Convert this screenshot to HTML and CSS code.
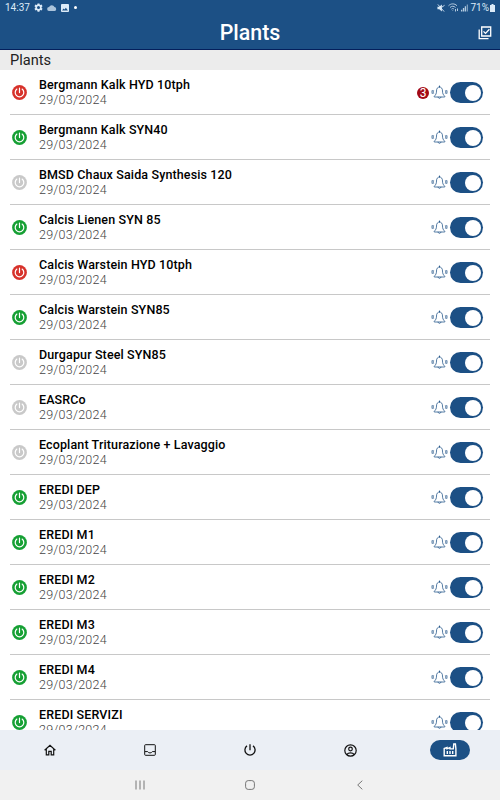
FILE: index.html
```html
<!DOCTYPE html>
<html lang="en">
<head>
  <meta charset="UTF-8" />
  <meta name="viewport" content="width=device-width, initial-scale=1" />
  <title>Plants</title>
  <link rel="stylesheet" href="styles.css">
</head>
<body>

  <!-- shared icons -->
  <svg class="sprite" aria-hidden="true">
    <symbol id="power" viewBox="0 0 15 15">
      <circle cx="7.5" cy="7.5" r="7.400" fill="currentColor"/>
      <path d="M4.900 4.100a4.300 4.300 0 1 0 5.200 0M7.500 3v4.600" fill="none" stroke="#fff" stroke-width="1.200" stroke-linecap="round"/>
    </symbol>
    <symbol id="bell" viewBox="0 0 18 16">
      <g fill="none" stroke="currentColor" stroke-width=".8" stroke-linecap="round" stroke-linejoin="round">
        <path d="M9 2c-2.200.2-3.200 2-3.200 4.400 0 2.800-.8 4.100-2.400 5.600v.8h11.200V12c-1.600-1.500-2.400-2.800-2.400-5.600C12.200 4 11.200 2.200 9 2zM7.500 13c.2 1.800 2.800 1.800 3 0M9 1v1"/>
        <path d="M2.600 6.100c-.4.900-.4 1.800 0 2.700M15.400 6.100c.4.900.4 1.800 0 2.700M1.300 5.700c-.5 1.100-.5 2.300 0 3.500M16.700 5.700c.5 1.100.5 2.300 0 3.500"/>
      </g>
    </symbol>
  </svg>

  <header class="top">
    <div class="status">
      <div class="status-left">
        <span>14:37</span>
        <svg width="9" height="9" viewBox="0 0 24 24" fill="currentColor"><path fill-rule="evenodd" d="M9.500 1h5l.7 3.200 2 1.100 3.100-1 2.500 4.400-2.400 2.200v2.200l2.400 2.200-2.500 4.400-3.100-1-2 1.100-.7 3.200h-5l-.7-3.200-2-1.100-3.100 1-2.500-4.400 2.400-2.200v-2.200L1.200 8.700l2.500-4.400 3.100 1 2-1.100zM12 8a4 4 0 1 0 0 8 4 4 0 0 0 0-8z"/></svg>
        <svg class="cloud" width="10" height="6" viewBox="0 0 20 12" fill="currentColor"><path d="M4.500 12a4 4 0 0 1-.4-8A6 6 0 0 1 15 4.200 4 4 0 0 1 15.500 12z"/></svg>
        <svg width="8" height="8" viewBox="0 0 18 18" fill="currentColor"><path fill-rule="evenodd" d="M2 0h14a2 2 0 0 1 2 2v14a2 2 0 0 1-2 2H2a2 2 0 0 1-2-2V2a2 2 0 0 1 2-2zM2.500 14.500h13L11 8.500l-3.200 4-2.200-2.500z"/></svg>
        <i class="dot"></i>
      </div>
      <div class="status-right">
        <svg width="8" height="8" viewBox="0 0 18 18" fill="currentColor"><path d="M1 6h4l6-5v16l-6-5H1z"/><path d="M2 1l14 16M11 7l6-4" stroke="currentColor" stroke-width="2"/></svg>
        <svg class="wifi" width="11" height="9" viewBox="0 0 22 18" fill="none" stroke="currentColor" stroke-width="2"><path d="M1 5.500c5-5 12-5 17 0M4 9c3.500-3.300 7.500-3.300 11 0M7 12.200c1.700-1.500 3.300-1.500 5 0M9.500 15v1M15 12v5M19 11v5"/></svg>
        <svg width="7" height="8" viewBox="0 0 16 16" fill="currentColor"><path d="M0 12h3v4H0zM4.300 8h3v8h-3zM8.600 4h3v12h-3z" opacity=".8"/><path d="M13 0h3v16h-3z" opacity=".5"/></svg>
        <span>71%</span>
        <svg width="5" height="8" viewBox="0 0 5 8" fill="currentColor"><path d="M1.500 0h2v1H5v7H0V1h1.500z"/></svg>
      </div>
    </div>
    <div class="title-bar">
      <h1>Plants</h1>
      <svg class="check-all" width="14" height="14" viewBox="0 0 14 14" fill="none" stroke="currentColor" stroke-width="1.300"><path d="M3.700 1h9v9h-9zM1.200 3.400v9.200h9.300"/><path d="M5.500 5.400l2 2 3.900-4.200"/></svg>
    </div>
  </header>

  <h2 class="section">Plants</h2>

  <main class="list" id="plantList"></main>

  <nav class="tabs">
    <a class="tab"><svg width="12" height="12" viewBox="0 0 12 12" fill="none" stroke="currentColor" stroke-width="1.200"><path d="M.6 6.300L6 1.300l5.400 5M2.300 5v5.900h2.500V7.300h2.400v3.600h2.500V5"/></svg></a>
    <a class="tab"><svg width="12" height="12" viewBox="0 0 12 12" fill="none" stroke="currentColor" stroke-width="1"><rect x=".7" y=".7" width="10.600" height="10.600" rx=".8"/><path d="M1 7.600h2.700c.8 1.800 3.800 1.800 4.600 0H11"/></svg></a>
    <a class="tab"><svg width="12" height="12" viewBox="0 0 12 12" fill="none" stroke="currentColor" stroke-width="1.300"><path d="M3 1.900a5.100 5.100 0 1 0 6 0M6 .3v5.900"/></svg></a>
    <a class="tab"><svg width="13" height="13" viewBox="0 0 13 13" fill="none" stroke="currentColor" stroke-width="1.200"><circle cx="6.500" cy="6.500" r="5.700"/><circle cx="6.500" cy="5" r="1.800"/><path d="M2.800 10.500c1.800-2.100 5.600-2.100 7.400 0"/></svg></a>
    <a class="tab active"><svg width="14" height="14" viewBox="0 0 14 14" fill="none" stroke="currentColor" stroke-width="1.400"><path d="M1.200 12.800V5.600L4 4.600v1.200l3-1.200v1.300h3.300L10.800 1h1.600l.5 4.900v6.900z"/><path d="M4.300 8v2.900M7 8v2.900M9.700 8v2.900"/></svg></a>
  </nav>

  <footer class="sysbar">
    <svg width="10" height="10" viewBox="0 0 10 10" stroke="currentColor"><path d="M1 .5v9M5 .5v9M9 .5v9"/></svg>
    <svg width="10" height="10" viewBox="0 0 10 10" fill="none" stroke="currentColor"><rect x=".6" y=".6" width="8.800" height="8.800" rx="2.600"/></svg>
    <svg width="10" height="10" viewBox="0 0 10 10" fill="none" stroke="currentColor"><path d="M7.300.7L2.700 5l4.600 4.300"/></svg>
  </footer>

  <script>
    /* status: on = running, off = stopped, idle = not connected */
    const plants = [
      { name: 'Bergmann Kalk HYD 10tph', status: 'off', alarms: 3 },
      { name: 'Bergmann Kalk SYN40', status: 'on' },
      { name: 'BMSD Chaux Saida Synthesis 120', status: 'idle' },
      { name: 'Calcis Lienen SYN 85', status: 'on' },
      { name: 'Calcis Warstein HYD 10tph', status: 'off' },
      { name: 'Calcis Warstein SYN85', status: 'on' },
      { name: 'Durgapur Steel SYN85', status: 'idle' },
      { name: 'EASRCo', status: 'idle' },
      { name: 'Ecoplant Triturazione + Lavaggio', status: 'idle' },
      { name: 'EREDI DEP', status: 'on' },
      { name: 'EREDI M1', status: 'on' },
      { name: 'EREDI M2', status: 'on' },
      { name: 'EREDI M3', status: 'on' },
      { name: 'EREDI M4', status: 'on' },
      { name: 'EREDI SERVIZI', status: 'on' }
    ];

    document.getElementById('plantList').innerHTML = plants.map(p => `
      <div class="plant">
        <svg class="power ${p.status}"><use href="#power"/></svg>
        <div class="info">
          <div class="name">${p.name}</div>
          <div class="date">29/03/2024</div>
        </div>
        ${p.alarms ? `<span class="badge">${p.alarms}</span>` : ''}
        <svg class="bell"><use href="#bell"/></svg>
        <span class="switch"></span>
      </div>`).join('');
  </script>
</body>
</html>
```

FILE: styles.css
```css
:root{
  --primary:#1c5085;
  --primary-dark:#041f5c;
}
*{box-sizing:border-box;margin:0;padding:0}
body{
  height:100vh;
  display:flex;
  flex-direction:column;
  overflow:hidden;
  background:#fff;
  font-family:Roboto,"Liberation Sans",sans-serif;
}
svg{display:block;flex:none}
.sprite{width:0;height:0;position:absolute}

/* header */
.top{
  height:50px;
  flex:none;
  background:var(--primary);
  border-bottom:1px solid var(--primary-dark);
  color:#fff;
}
.status{
  height:15px;
  padding:0 5px;
  display:flex;
  justify-content:space-between;
  font-size:10px;
  line-height:16px;
  color:#dcebf8;
}
.status-left,.status-right{display:flex;align-items:center}
.status-left{gap:4px}
.status-right{gap:2px}
.status-right svg:last-child{margin-left:-1px}
.cloud{opacity:.75}
.wifi{opacity:.8;margin-left:1px}
.dot{width:3px;height:3px;margin-left:1px;border-radius:50%;background:#fff}
.title-bar{
  height:34px;
  padding:0 8px;
  display:grid;
  grid-template-columns:1fr auto 1fr;
  align-items:center;
}
h1{grid-column:2;padding-top:1px;font-size:21.400px;font-weight:500;line-height:34px}
.check-all{justify-self:end}

.section{
  height:20px;
  flex:none;
  padding-left:10px;
  background:#ececec;
  color:#222;
  font-size:14.600px;
  font-weight:400;
  line-height:20px;
}

/* plant list */
.list{flex:1;min-height:0;overflow:hidden;padding:0 10px}
.plant{
  height:45px;
  padding-right:7px;
  display:flex;
  align-items:center;
  border-bottom:1px solid #c8c8c8;
}
.power{width:15px;height:15px;margin:1px 12px 0 2px}
.on{color:#16a034}
.off{color:#d7322b}
.idle{color:#c9c9c9}
.info{flex:1}
.name{font-size:12.500px;font-weight:500;line-height:15px;letter-spacing:.13px;color:#000}
.date{font-size:12.500px;font-weight:300;line-height:15px;letter-spacing:.25px;color:#444}
.badge{
  width:12px;
  height:12px;
  margin-top:1px;
  margin-right:2px;
  border-radius:50%;
  background:#a30a15;
  color:#fff;
  font-size:12px;
  line-height:13px;
  text-align:center;
}
.bell{width:17px;height:15px;margin:1px 2px 0 0;color:var(--primary)}
.switch{
  width:33px;
  height:21px;
  margin-top:1px;
  padding:2.500px;
  border-radius:11px;
  background:var(--primary);
}
.switch::after{
  content:"";
  display:block;
  width:16px;
  height:16px;
  margin-left:auto;
  border-radius:50%;
  background:#fff;
}

/* bottom navigation */
.tabs{
  height:40px;
  flex:none;
  display:grid;
  grid-template-columns:repeat(5,1fr);
  place-items:center;
  background:#ebeff5;
}
.tab{
  width:40px;
  height:20px;
  display:flex;
  align-items:center;
  justify-content:center;
  border-radius:10px;
  color:#111;
}
.tab.active{background:var(--primary);color:#fff}

.sysbar{
  height:30px;
  flex:none;
  padding-bottom:1px;
  display:flex;
  justify-content:center;
  align-items:center;
  gap:100px;
  background:#f1f1f1;
  color:#777;
}
```
